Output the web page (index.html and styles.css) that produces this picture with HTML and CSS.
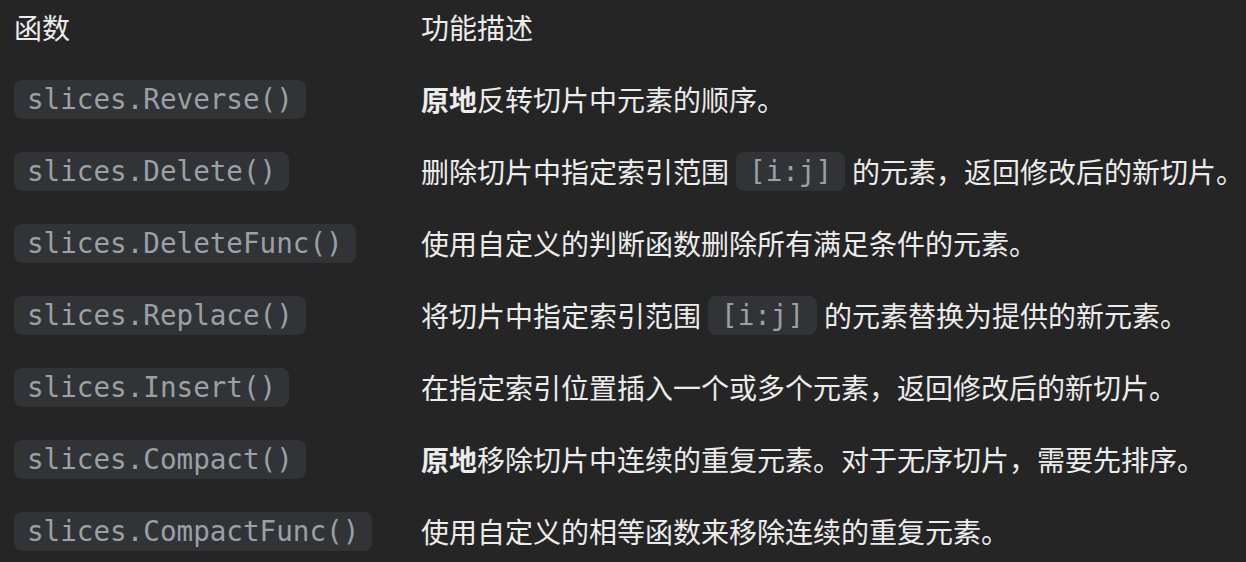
FILE: index.html
```html
<!DOCTYPE html>
<html lang="zh-CN">
<head>
<meta charset="utf-8">
<title>slices 函数</title>
<link rel="stylesheet" href="styles.css">
</head>
<body>
<div class="table">
  <div class="row head">
    <div class="c1">函数</div>
    <div class="c2">功能描述</div>
  </div>
  <div class="row">
    <div class="c1"><code class="chip">slices.Reverse()</code></div>
    <div class="c2"><strong>原地</strong>反转切片中元素的顺序。</div>
  </div>
  <div class="row">
    <div class="c1"><code class="chip">slices.Delete()</code></div>
    <div class="c2">删除切片中指定索引范围 <code class="chip">[i:j]</code> 的元素，返回修改后的新切片。</div>
  </div>
  <div class="row">
    <div class="c1"><code class="chip">slices.DeleteFunc()</code></div>
    <div class="c2">使用自定义的判断函数删除所有满足条件的元素。</div>
  </div>
  <div class="row">
    <div class="c1"><code class="chip">slices.Replace()</code></div>
    <div class="c2">将切片中指定索引范围 <code class="chip">[i:j]</code> 的元素替换为提供的新元素。</div>
  </div>
  <div class="row">
    <div class="c1"><code class="chip">slices.Insert()</code></div>
    <div class="c2">在指定索引位置插入一个或多个元素，返回修改后的新切片。</div>
  </div>
  <div class="row">
    <div class="c1"><code class="chip">slices.Compact()</code></div>
    <div class="c2"><strong>原地</strong>移除切片中连续的重复元素。对于无序切片，需要先排序。</div>
  </div>
  <div class="row">
    <div class="c1"><code class="chip">slices.CompactFunc()</code></div>
    <div class="c2">使用自定义的相等函数来移除连续的重复元素。</div>
  </div>
</div>
</body>
</html>
```

FILE: styles.css
```css
html, body {
  margin: 0;
  padding: 0;
  background: #252525;
}
body {
  font-family: "Noto Sans CJK SC", "Noto Sans", sans-serif;
  font-size: 28px;
  color: #ececec;
  overflow: hidden;
}
.table {
  padding-left: 14px;
}
.row {
  display: grid;
  grid-template-columns: 407px 1fr;
  align-items: center;
  height: 72px;
  white-space: nowrap;
}
.row.head {
  height: 54px;
  margin-bottom: 9px;
}
.c1 {
  display: flex;
  align-items: center;
  line-height: 39px;
}
.c2 {
  display: flex;
  align-items: center;
  line-height: 39px;
}
.c2 .chip {
  margin: 0 7px 0 7px;
}
strong {
  font-weight: 700;
}
.chip {
  display: block;
  font-family: "DejaVu Sans Mono", monospace;
  font-size: 27.6px;
  line-height: 39px;
  height: 39px;
  padding: 0 13px;
  border-radius: 8px;
  background: #323336;
  color: #9aa0a7;
}
```
